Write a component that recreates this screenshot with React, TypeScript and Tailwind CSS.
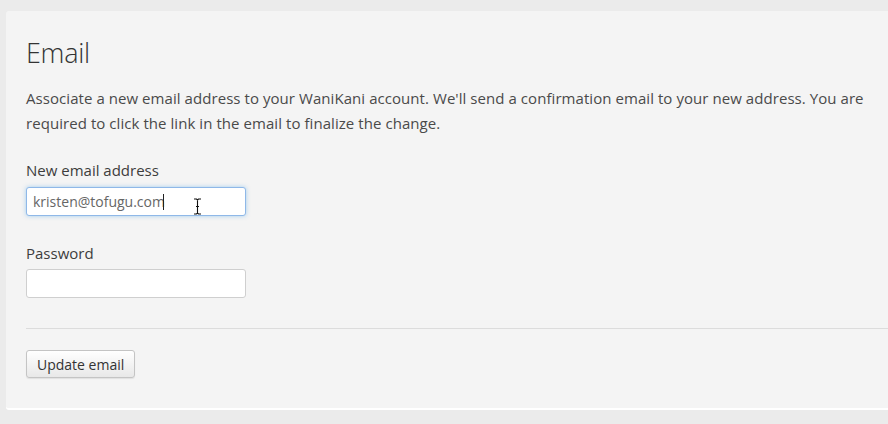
import { useState } from 'react'

function Field({ label, children }: { label: string; children: React.ReactNode }) {
  return (
    <div className="flex flex-col">
      <label className="text-[15px] leading-[20px] text-[#3d3d3d] mb-[6px]">{label}</label>
      {children}
    </div>
  )
}

export default function App() {
  const [email, setEmail] = useState('kristen@tofugu.com')
  const [pw, setPw] = useState('')

  return (
    <div className="w-[888px] h-[424px] overflow-hidden bg-[#ebebeb] pt-[11px] pl-[6px] font-['Open_Sans',sans-serif]">
      <div className="h-[399px] bg-[#f4f4f4] rounded-tl-[3px] rounded-bl-[3px] border-b-2 border-b-white pl-[20px] pt-[27px]">
        <h1 className="text-[27px] leading-[30px] font-light text-[#333] tracking-[-0.3px]">Email</h1>

        <p className="mt-[18px] text-[15px] leading-[25px] text-[#4a4a4a] tracking-[0.06px] pr-[6px]">
          Associate a new email address to your WaniKani account. We'll send a confirmation email to your new address. You are required to click the link in the email to finalize the change.
        </p>

        <div className="mt-[24px] flex flex-col gap-[27px]">
          <Field label="New email address">
            <div className="relative w-[220px] mt-[1px]">
              <input
                value={email}
                onChange={e => setEmail(e.target.value)}
                className="w-[220px] h-[29px] px-[6px] text-[14px] text-[#666] bg-white rounded-[3px] border border-[#8fb8e8] shadow-[0_0_4px_rgba(82,168,236,0.5)] outline-none"
              />
              {/* caret */}
              <span className="absolute left-[137px] top-[7px] w-px h-[16px] bg-[#222]" />
              {/* mouse I-beam */}
              <svg className="absolute left-[167px] top-[11px]" width="9" height="17" viewBox="0 0 9 17">
                <path d="M1 1h2.5l1 1 1-1H8M4.5 2v13M1 16h2.5l1-1 1 1H8" fill="none" stroke="#fff" strokeWidth="2.6" />
                <path d="M1 1h2.5l1 1 1-1H8M4.5 2v13M1 16h2.5l1-1 1 1H8M3 8.5h3" fill="none" stroke="#111" strokeWidth="1.1" />
              </svg>
            </div>
          </Field>
          <Field label="Password">
            <input
              type="password"
              value={pw}
              onChange={e => setPw(e.target.value)}
              className="w-[220px] h-[29px] px-[6px] text-[14px] bg-white rounded-[3px] border border-[#cfcfcf] outline-none"
            />
          </Field>
        </div>

        <div className="mt-[30px] border-t border-[#dcdcdc]" />

        <button className="mt-[21px] h-[28px] px-[10px] text-[14px] text-[#333] rounded-[3px] border border-[#c4c4c4] bg-gradient-to-b from-white to-[#e8e8e8] shadow-[0_1px_1px_rgba(0,0,0,0.08)]">
          Update email
        </button>
      </div>
    </div>
  )
}
